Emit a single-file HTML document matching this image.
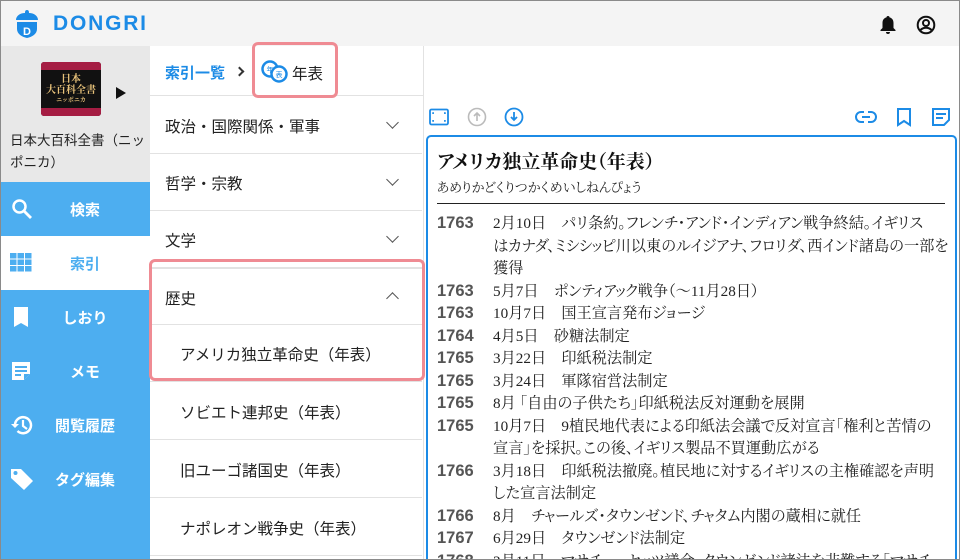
<!DOCTYPE html>
<html><head><meta charset="utf-8"><style>
*{box-sizing:border-box;margin:0;padding:0}
html,body{width:960px;height:560px;overflow:hidden}
body{background:#fff;font-family:"Liberation Sans","Noto Sans CJK JP",sans-serif;position:relative;color:#222}
.frame{position:absolute;left:0;top:0;width:960px;height:560px;border:1px solid #8a8a8a;pointer-events:none;z-index:50}
.hdr{position:absolute;left:0;top:0;width:960px;height:46px;background:#f4f4f4}
.logo{position:absolute;left:53px;top:12px;font:bold 21px "Liberation Sans",sans-serif;color:#1c8be6;letter-spacing:1.8px}
.side{position:absolute;left:0;top:46px;width:150px;height:514px;background:#4daef0}
.book{position:absolute;left:0;top:0;width:150px;height:136px;background:#e8e8e8}
.cover{position:absolute;left:41px;top:16px;width:60px;height:54px;border-radius:3px;background:#111;overflow:hidden}
.cover .b{position:absolute;left:0;width:60px;height:8px;background:#a51d43}
.cover .t{position:absolute;left:0;width:60px;text-align:center;color:#e8c27a;font-family:"Noto Serif CJK SC",serif;font-weight:bold}
.btitle{position:absolute;left:10px;top:84px;font-size:13.5px;line-height:22px;color:#222;width:140px}
.nav{position:absolute;left:0;width:150px;height:54px;color:#fff;font-size:15px;font-weight:bold}
.nav span{position:absolute;left:0;width:170px;text-align:center;top:17px}
.nav svg{position:absolute;left:10px;top:15px}
.mid{position:absolute;left:150px;top:46px;width:274px;height:514px;background:#fff;border-right:1px solid #e2e2e2}
.bc{position:absolute;left:0;top:0;width:274px;height:50px;border-bottom:1px solid #e2e2e2}
.row{position:absolute;left:0;width:272px;border-bottom:1px solid #e2e2e2;font-size:15.5px;color:#222}
.row span{position:absolute;left:15px}
.row.sub span{left:30px}
.chev{position:absolute;left:238px;width:9px;height:9px;border-right:1.8px solid #555;border-bottom:1.8px solid #555;transform:rotate(45deg)}
.hl{position:absolute;border:3.5px solid #ef8b93;border-radius:6px;z-index:20}
.box{position:absolute;left:426px;top:135px;width:531px;height:430px;border:2.5px solid #1c8be6;border-radius:5px;background:#fff;overflow:hidden}
.ser{font-family:"Liberation Serif","Noto Serif CJK SC",serif;font-feature-settings:"palt"}
.ent{position:absolute;left:9px;top:76px;width:515px;font-size:15.2px;line-height:22.5px;white-space:nowrap}
.ent div{position:relative;padding-left:56px}
.ent b{position:absolute;left:0;font:bold 16.5px "Liberation Sans",sans-serif;color:#555;top:1px}
</style></head><body>
<div class="hdr">
<svg style="position:absolute;left:15px;top:9px" width="24" height="30" viewBox="0 0 24 30"><path d="M12 1c2 0 2 2 2 3 5 0 9 3 9 7H1c0-4 4-7 9-7 0-1 0-3 2-3z" fill="#1c8be6"/><path d="M2 13h20v7c0 5-5 8-10 9-5-1-10-4-10-9z" fill="#1c8be6"/><text x="12" y="26" font-family="Liberation Sans" font-weight="bold" font-size="11" fill="#fff" text-anchor="middle">D</text></svg>
<div class="logo">DONGRI</div>
<svg style="position:absolute;left:879px;top:15px" width="18" height="20" viewBox="0 0 18 20"><path d="M9 1c1 0 1.5.6 1.5 1.4C13 3 14.5 5 14.5 8v5l2 2v1h-15v-1l2-2V8c0-3 1.5-5 4-5.6C7.5 1.6 8 1 9 1zM7 17h4a2 2 0 0 1-4 0z" fill="#111"/></svg>
<svg style="position:absolute;left:916px;top:15px" width="20" height="20" viewBox="0 0 20 20"><circle cx="10" cy="10" r="8.3" fill="none" stroke="#111" stroke-width="2"/><circle cx="10" cy="8" r="3" fill="none" stroke="#111" stroke-width="2"/><path d="M4.5 15c3-3 8-3 11 0" fill="none" stroke="#111" stroke-width="2"/></svg>
</div>
<div class="side">
<div class="book">
<div class="cover"><div class="b" style="top:0"></div><div class="b" style="top:46px"></div>
<div class="t" style="top:10px;font-size:10px;line-height:11px">日本</div>
<div class="t" style="top:21px;font-size:10px;line-height:11px">大百科全書</div>
<div class="t" style="top:34px;font-size:6px;line-height:8px">ニッポニカ</div></div>
<div style="position:absolute;left:116px;top:41px;width:0;height:0;border-left:10px solid #111;border-top:6px solid transparent;border-bottom:6px solid transparent"></div>
<div class="btitle">日本大百科全書（ニッポニカ）</div>
</div>
<div class="nav" style="top:136px"><svg width="24" height="24" viewBox="0 0 24 24"><circle cx="9.5" cy="9.5" r="6" fill="none" stroke="#fff" stroke-width="2.5"/><path d="M14 14l7 7" stroke="#fff" stroke-width="2.8"/></svg><span>検索</span></div>
<div class="nav" style="top:190px;background:#fff;color:#4daef0"><svg width="22" height="22" viewBox="0 0 22 22" fill="#4daef0"><rect x="0" y="2" width="6.5" height="5.5"/><rect x="7.5" y="2" width="6.5" height="5.5"/><rect x="15" y="2" width="6.5" height="5.5"/><rect x="0" y="8.5" width="6.5" height="5.5"/><rect x="7.5" y="8.5" width="6.5" height="5.5"/><rect x="15" y="8.5" width="6.5" height="5.5"/><rect x="0" y="15" width="6.5" height="5.5"/><rect x="7.5" y="15" width="6.5" height="5.5"/><rect x="15" y="15" width="6.5" height="5.5"/></svg><span>索引</span></div>
<div class="nav" style="top:244px"><svg width="22" height="24" viewBox="0 0 22 24"><path d="M4 2h14v20l-7-4-7 4z" fill="#fff"/></svg><span>しおり</span></div>
<div class="nav" style="top:298px"><svg width="22" height="24" viewBox="0 0 22 24"><path d="M2 3h18v12l-6 6H2z" fill="#fff"/><path d="M5 8h12M5 12h12M5 16h6" stroke="#4daef0" stroke-width="2"/><path d="M14 21v-6h6" fill="#4daef0"/></svg><span>メモ</span></div>
<div class="nav" style="top:352px"><svg width="24" height="24" viewBox="0 0 24 24"><path d="M5 12a8 8 0 1 1 2.5 6" fill="none" stroke="#fff" stroke-width="2.5"/><path d="M1 11l4 4 4-4z" fill="#fff"/><path d="M13 7v6l4 3" fill="none" stroke="#fff" stroke-width="2.2"/></svg><span>閲覧履歴</span></div>
<div class="nav" style="top:406px"><svg width="24" height="24" viewBox="0 0 24 24"><path d="M1 2h10l12 12-9 9L1 11z" fill="#fff"/><circle cx="5.5" cy="6" r="2" fill="#4daef0"/></svg><span>タグ編集</span></div>
</div>
<div class="mid">
<div class="bc"><span style="position:absolute;left:15px;top:16px;font-size:15px;font-weight:bold;color:#1c8be6">索引一覧</span>
<div style="position:absolute;left:86px;top:22px;width:7px;height:7px;border-right:2px solid #333;border-top:2px solid #333;transform:rotate(45deg)"></div>
<svg style="position:absolute;left:111px;top:13px" width="28" height="24" viewBox="0 0 28 24"><circle cx="9" cy="10" r="7.5" fill="#fff" stroke="#1c8be6" stroke-width="2.5"/><circle cx="18" cy="15" r="7.5" fill="#fff" stroke="#1c8be6" stroke-width="2.5"/><text x="9" y="13" font-size="7" fill="#1c8be6" text-anchor="middle" font-family="Noto Sans CJK JP">年</text><text x="18" y="18" font-size="7" fill="#1c8be6" text-anchor="middle" font-family="Noto Sans CJK JP">表</text></svg>
<span style="position:absolute;left:142px;top:16px;font-size:15.5px">年表</span></div>
<div class="row" style="top:51px;height:57px"><span style="top:18px">政治・国際関係・軍事</span><i class="chev" style="top:21px"></i></div>
<div class="row" style="top:108px;height:57px"><span style="top:18px">哲学・宗教</span><i class="chev" style="top:21px"></i></div>
<div class="row" style="top:165px;height:57px"><span style="top:18px">文学</span><i class="chev" style="top:21px"></i></div>
<div class="row" style="top:222px;height:57px;border-top:1px solid #e2e2e2"><span style="top:18px">歴史</span><i class="chev" style="top:25px;transform:rotate(225deg)"></i></div>
<div class="row sub" style="top:279px;height:57px"><span style="top:18px">アメリカ独立革命史（年表）</span></div>
<div class="row sub" style="top:336px;height:58px"><span style="top:19px">ソビエト連邦史（年表）</span></div>
<div class="row sub" style="top:394px;height:58px"><span style="top:19px">旧ユーゴ諸国史（年表）</span></div>
<div class="row sub" style="top:452px;height:58px"><span style="top:19px">ナポレオン戦争史（年表）</span></div>
</div>
<div class="hl" style="left:252px;top:42px;width:86px;height:56px"></div>
<div class="hl" style="left:149px;top:259px;width:276px;height:122px"></div>
<svg style="position:absolute;left:429px;top:108px" width="20" height="18" viewBox="0 0 20 18"><rect x="1" y="1.5" width="18" height="15" rx="1.5" fill="none" stroke="#1c8be6" stroke-width="1.8"/><path d="M4 6V5h1M15 5h1v1M4 12v1h1M15 13h1v-1" stroke="#1c8be6" stroke-width="1.5" fill="none"/></svg>
<svg style="position:absolute;left:467px;top:107px" width="20" height="20" viewBox="0 0 20 20"><circle cx="10" cy="10" r="8.5" fill="none" stroke="#bbb" stroke-width="1.6"/><path d="M10 14V6M7 9l3-3 3 3" fill="none" stroke="#bbb" stroke-width="1.6"/></svg>
<svg style="position:absolute;left:504px;top:107px" width="20" height="20" viewBox="0 0 20 20"><circle cx="10" cy="10" r="8.5" fill="none" stroke="#1c8be6" stroke-width="1.8"/><path d="M10 5v8M7 10l3 3 3-3" fill="none" stroke="#1c8be6" stroke-width="1.8"/></svg>
<svg style="position:absolute;left:855px;top:109px" width="22" height="16" viewBox="0 0 22 16"><path d="M9 3H6a5 5 0 0 0 0 10h3M13 3h3a5 5 0 0 1 0 10h-3M7 8h8" fill="none" stroke="#1c8be6" stroke-width="2"/></svg>
<svg style="position:absolute;left:895px;top:107px" width="18" height="20" viewBox="0 0 18 20"><path d="M3 2h12v16l-6-4-6 4z" fill="none" stroke="#1c8be6" stroke-width="2"/></svg>
<svg style="position:absolute;left:931px;top:107px" width="20" height="20" viewBox="0 0 20 20"><path d="M2 2h16v11l-5 5H2z" fill="none" stroke="#1c8be6" stroke-width="2"/><path d="M5 7h10M5 11h7" stroke="#1c8be6" stroke-width="2"/></svg>
<div class="box ser">
<div style="position:absolute;left:9px;top:10px;font-size:19px;font-weight:bold;color:#111;font-family:'Noto Serif CJK SC',serif">アメリカ独立革命史（年表）</div>
<div style="position:absolute;left:9px;top:40px;font-size:13px;color:#222">あめりかどくりつかくめいしねんぴょう</div>
<div style="position:absolute;left:9px;top:66px;width:508px;height:1px;background:#222"></div>
<div class="ent">
<div><b>1763</b>2月10日　パリ条約。フレンチ・アンド・インディアン戦争終結。イギリス<br>はカナダ、ミシシッピ川以東のルイジアナ、フロリダ、西インド諸島の一部を<br>獲得</div>
<div><b>1763</b>5月7日　ポンティアック戦争（～11月28日）</div>
<div><b>1763</b>10月7日　国王宣言発布ジョージ</div>
<div><b>1764</b>4月5日　砂糖法制定</div>
<div><b>1765</b>3月22日　印紙税法制定</div>
<div><b>1765</b>3月24日　軍隊宿営法制定</div>
<div><b>1765</b>8月 「自由の子供たち」印紙税法反対運動を展開</div>
<div><b>1765</b>10月7日　9植民地代表による印紙法会議で反対宣言「権利と苦情の<br>宣言」を採択。この後、イギリス製品不買運動広がる</div>
<div><b>1766</b>3月18日　印紙税法撤廃。植民地に対するイギリスの主権確認を声明<br>した宣言法制定</div>
<div><b>1766</b>8月　チャールズ・タウンゼンド、チャタム内閣の蔵相に就任</div>
<div><b>1767</b>6月29日　タウンゼンド法制定</div>
<div><b>1768</b>2月11日　マサチューセッツ議会、タウンゼンド諸法を非難する「マサチ</div>
</div>
</div>
<div class="frame"></div>
</body></html>
